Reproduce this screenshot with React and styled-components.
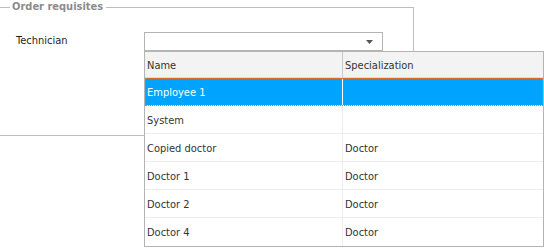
import React from "react";
import styled, { createGlobalStyle } from "styled-components";

const rows = [
  { name: "Employee 1", spec: "", selected: true },
  { name: "System", spec: "" },
  { name: "Copied doctor", spec: "Doctor" },
  { name: "Doctor 1", spec: "Doctor" },
  { name: "Doctor 2", spec: "Doctor" },
  { name: "Doctor 4", spec: "Doctor" },
];

const App = () => {
  return (
    <Page>
      <GlobalStyle />
      <Group>
        <Legend>Order requisites</Legend>
        <FieldRow>
          <Label>Technician</Label>
          <Combo>
            <Arrow>
              <svg width="7" height="4" viewBox="0 0 7 4">
                <path d="M0 0h7L3.5 4z" fill="#555" />
              </svg>
            </Arrow>
            <Dropdown>
              <HeaderRow>
                <HeaderCell>Name</HeaderCell>
                <HeaderCell $last>Specialization</HeaderCell>
              </HeaderRow>
              {rows.map((row) => (
                <Row key={row.name} $selected={row.selected}>
                  <Cell $selected={row.selected}>{row.name}</Cell>
                  <Cell $selected={row.selected} $last>
                    {row.spec}
                  </Cell>
                </Row>
              ))}
            </Dropdown>
          </Combo>
        </FieldRow>
      </Group>
    </Page>
  );
};

const GlobalStyle = createGlobalStyle`
  html, body {
    margin: 0;
    background: #fff;
  }
  body {
    font-family: "DejaVu Sans Condensed", "DejaVu Sans", sans-serif;
    font-size: 11px;
    color: #1e1e1e;
  }
`;

const Page = styled.div`
  width: 544px;
  height: 248px;
  overflow: hidden;
  padding-top: 7px;
  box-sizing: border-box;
`;

const Group = styled.div`
  position: relative;
  box-sizing: border-box;
  margin-left: -2px;
  width: 416px;
  height: 129px;
  border: 1px solid #bdbdbd;
  border-left-color: transparent;
`;

const Legend = styled.div`
  position: absolute;
  top: -8px;
  left: 11px;
  padding: 0 3px 0 2px;
  background: #fff;
  font-weight: bold;
  font-size: 11px;
  line-height: 14px;
  color: #8c8c8c;
`;

const FieldRow = styled.div`
  display: flex;
  align-items: center;
  padding: 24px 0 0 17px;
`;

const Label = styled.div`
  width: 128px;
  margin-top: -2px;
`;

const Combo = styled.div`
  position: relative;
  box-sizing: border-box;
  width: 239px;
  height: 19px;
  border: 1px solid #b4b4b4;
  background: #fff;
  display: flex;
  align-items: center;
  justify-content: flex-end;
`;

const Arrow = styled.div`
  display: flex;
  width: 14px;
  margin-right: 2px;
  svg {
    display: block;
  }
`;

const Dropdown = styled.div`
  position: absolute;
  top: 18px;
  left: -1px;
  box-sizing: border-box;
  width: 400px;
  height: 196px;
  border: 1px solid #b4b4b4;
  background: #fff;
  z-index: 2;
`;

const HeaderRow = styled.div`
  display: grid;
  grid-template-columns: 198px 1fr;
  box-sizing: border-box;
  height: 26px;
  background: #f3f3f3;
  border-bottom: 1px solid #dcdcdc;
`;

const HeaderCell = styled.div`
  display: flex;
  align-items: center;
  padding: 2px 0 0 2px;
  border-right: ${(p) => (p.$last ? "none" : "1px solid #c9c9c9")};
  color: #333;
`;

const Row = styled.div`
  display: grid;
  grid-template-columns: 198px 1fr;
  height: 28px;
  box-sizing: border-box;
  border-bottom: 1px solid #ececec;
  background: ${(p) => (p.$selected ? "#00a4ff" : "#fff")};
  outline: ${(p) => (p.$selected ? "1px dotted #e0762f" : "none")};
  outline-offset: -1px;
  &:last-child {
    border-bottom: none;
  }
`;

const Cell = styled.div`
  display: flex;
  align-items: center;
  padding: 1px 0 0 2px;
  color: ${(p) => (p.$selected ? "#fff" : "#333")};
  border-right: ${(p) =>
    p.$last ? "none" : p.$selected ? "1px solid #fff" : "1px solid #ececec"};
`;

export default App;
